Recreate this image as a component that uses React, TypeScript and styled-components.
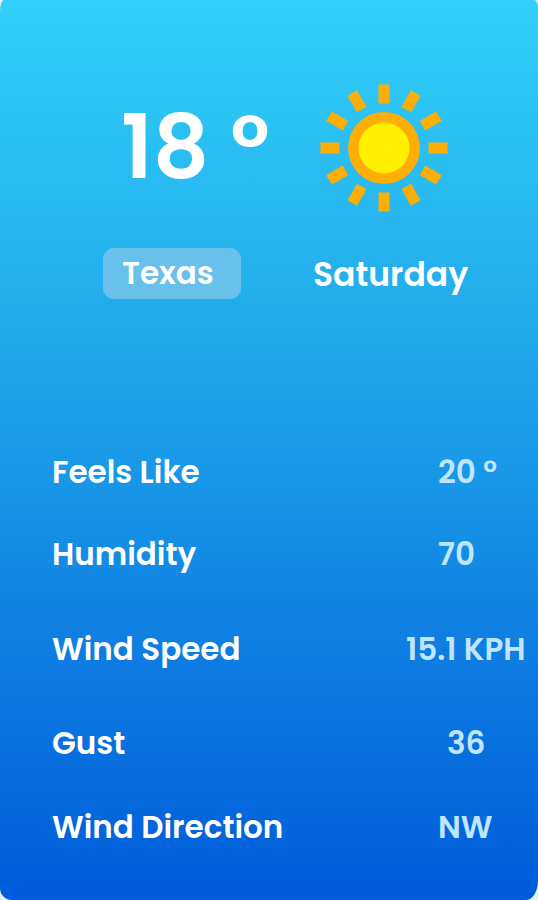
import React from "react";
import styled, { createGlobalStyle } from "styled-components";

const GlobalStyle = createGlobalStyle`
  *, *::before, *::after { box-sizing: border-box; }
  body {
    margin: 0;
    background: #e4eef4;
    font-family: Poppins, Inter, "Liberation Sans", sans-serif;
    font-weight: 600;
    color: #ffffff;
  }
`;

const Card = styled.main`
  min-height: 100vh;
  padding: 84px 12px 32px 52px;
  border-radius: 4px 4px 12px 12px / 12px 8px 20px 12px;
  background: linear-gradient(180deg, #31d0f9 0%, #24afed 31%, #1998e8 52%, #0f7fe2 71%, #015fda 97%, #005cd9 100%);
`;

const Summary = styled.header`
  display: grid;
  grid-template-columns: 210px 1fr;
  row-gap: 36px;
  align-items: start;
`;

const Temperature = styled.h1`
  margin: 0;
  padding-left: 69px;
  font-size: 88px;
  font-weight: 600;
  line-height: 128px;
  white-space: nowrap;
`;

const SunIcon = styled.svg`
  display: block;
  width: 128px;
  height: 128px;
  margin-left: 58px;
`;

const Place = styled.div`
  justify-self: start;
  width: 138px;
  margin-left: 51px;
  padding-left: 19px;
  border-radius: 11px;
  background: #69c0ea;
  font-size: 31px;
  line-height: 51px;
`;

const Day = styled.div`
  padding-left: 51px;
  font-size: 33px;
  line-height: 54px;
`;

const Details = styled.dl`
  margin: 150px 0 0;
`;

const Detail = styled.div<{ $gap: number }>`
  display: grid;
  grid-template-columns: 1fr 120px;
  margin-bottom: ${({ $gap }) => $gap}px;
  font-size: 31px;
  line-height: 40px;
  white-space: nowrap;
`;

const Label = styled.dt``;

const Value = styled.dd<{ $indent: number }>`
  margin: 0;
  padding-left: ${({ $indent }) => $indent}px;
  color: #bfe6ff;
`;

const rayAngles = Array.from({ length: 12 }, (_, i) => i * 30);

const details = [
  { label: "Feels Like", value: "20 °", indent: 32, gap: 42 },
  { label: "Humidity", value: "70", indent: 32, gap: 55 },
  { label: "Wind Speed", value: "15.1 KPH", indent: 0, gap: 54 },
  { label: "Gust", value: "36", indent: 41, gap: 44 },
  { label: "Wind Direction", value: "NW", indent: 32, gap: 0 },
];

export default function App() {
  return (
    <>
      <GlobalStyle />
      <Card>
        <Summary>
          <Temperature>18 °</Temperature>
          <SunIcon viewBox="0 0 128 128" role="img" aria-label="Sunny">
            {rayAngles.map((angle) => (
              <rect key={angle} x="58.5" y="0.5" width="11" height="19" fill="#ffae05" transform={`rotate(${angle} 64 64)`} />
            ))}
            <circle cx="64" cy="64" r="36" fill="#ffae05" />
            <circle cx="64" cy="64" r="25.5" fill="#fff000" />
          </SunIcon>
          <Place>Texas</Place>
          <Day>Saturday</Day>
        </Summary>
        <Details>
          {details.map(({ label, value, indent, gap }) => (
            <Detail key={label} $gap={gap}>
              <Label>{label}</Label>
              <Value $indent={indent}>{value}</Value>
            </Detail>
          ))}
        </Details>
      </Card>
    </>
  );
}
